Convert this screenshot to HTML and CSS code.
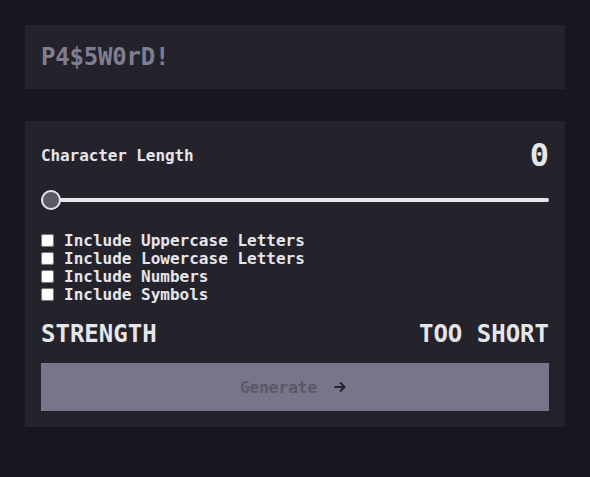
FILE: index.html
```html
<!DOCTYPE html>
<html lang="en">
<head>
<meta charset="utf-8">
<title>Password Generator</title>
<link rel="stylesheet" href="styles.css">
</head>
<body>
<main class="app">
  <div class="output">P4$5W0rD!</div>
  <section class="card">
    <div class="length-row">
      <span class="label">Character Length</span>
      <span class="length-value">0</span>
    </div>
    <div class="slider">
      <div class="track"></div>
      <div class="thumb"></div>
    </div>
    <div class="options">
      <label class="option"><input type="checkbox"><span>Include Uppercase Letters</span></label>
      <label class="option"><input type="checkbox"><span>Include Lowercase Letters</span></label>
      <label class="option"><input type="checkbox"><span>Include Numbers</span></label>
      <label class="option"><input type="checkbox"><span>Include Symbols</span></label>
    </div>
    <div class="strength">
      <span>STRENGTH</span>
      <span>TOO SHORT</span>
    </div>
    <button class="generate" type="button">
      <span>Generate</span>
      <svg class="arrow" width="12" height="12" viewBox="0 0 12 12" aria-hidden="true">
        <path d="M0.5 6 H10.5 M6 1.5 L10.5 6 L6 10.5" fill="none" stroke="#24232c" stroke-width="2"/>
      </svg>
    </button>
  </section>
</main>
</body>
</html>
```

FILE: styles.css
```css
* { box-sizing: border-box; }

html, body {
  margin: 0;
  background: #18171f;
}

body {
  font-family: "DejaVu Sans Mono", "Liberation Mono", monospace;
  font-weight: bold;
  color: #e6e5ea;
}

.app {
  padding: 25px;
  display: flex;
  flex-direction: column;
  gap: 32px;
}

.output {
  height: 64px;
  background: #24232c;
  display: flex;
  align-items: center;
  padding: 0 16px;
  font-size: 24px;
  color: #817d92;
  letter-spacing: -0.2px;
}

.card {
  background: #24232c;
  padding: 16px;
  display: flex;
  flex-direction: column;
}

.length-row {
  height: 36px;
  display: flex;
  justify-content: space-between;
  align-items: center;
}

.label {
  font-size: 16px;
  letter-spacing: -0.1px;
}

.length-value {
  font-size: 32px;
  line-height: 1;
}

.slider {
  position: relative;
  height: 20px;
  margin-top: 17px;
  display: flex;
  align-items: center;
}

.track {
  width: 100%;
  height: 4px;
  background: #e6e5ea;
  border-radius: 2px;
}

.thumb {
  position: absolute;
  left: 0;
  top: 0;
  width: 20px;
  height: 20px;
  border-radius: 50%;
  background: #5b5a67;
  border: 2px solid #e6e5ea;
}

.options {
  margin-top: 21px;
  display: flex;
  flex-direction: column;
}

.option {
  height: 18px;
  display: flex;
  align-items: center;
  gap: 10px;
  font-size: 16px;
  letter-spacing: 0;
}

.option input {
  margin: 0;
  width: 13px;
  height: 13px;
}

.strength {
  margin-top: 15px;
  height: 30px;
  display: flex;
  justify-content: space-between;
  align-items: center;
  font-size: 24px;
  letter-spacing: 0;
  padding-top: 2px;
}

.generate {
  margin-top: 15px;
  height: 48px;
  border: none;
  background: #787489;
  display: flex;
  align-items: center;
  justify-content: center;
  gap: 17px;
  font-family: inherit;
  font-weight: bold;
  font-size: 16px;
  color: #5a5963;
  padding: 0 4px 0 0;
}

.arrow { display: block; }
```
